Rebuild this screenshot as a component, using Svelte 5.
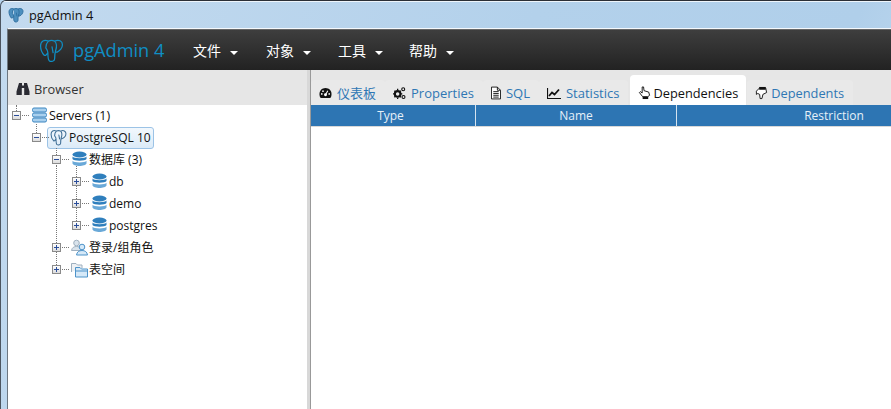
<script>
	const menus = ['文件', '对象', '工具', '帮助'];

	const tabs = [
		{ id: 'dashboard', label: '仪表板' },
		{ id: 'properties', label: 'Properties' },
		{ id: 'sql', label: 'SQL' },
		{ id: 'statistics', label: 'Statistics' },
		{ id: 'dependencies', label: 'Dependencies', active: true },
		{ id: 'dependents', label: 'Dependents' }
	];

	const columns = [
		{ label: 'Type', width: 165 },
		{ label: 'Name', width: 201 },
		{ label: 'Restriction', width: 315 }
	];

	// up = length of the dotted line that climbs from the toggle to its parent
	const tree = [
		{ depth: 0, open: true, icon: 'servers', label: 'Servers (1)', up: 6 },
		{ depth: 1, open: true, icon: 'elephant', label: 'PostgreSQL 10', up: 9, selected: true },
		{ depth: 2, open: true, icon: 'database', label: '数据库 (3)', up: 7 },
		{ depth: 3, icon: 'database', label: 'db', up: 11 },
		{ depth: 3, icon: 'database', label: 'demo', up: 13 },
		{ depth: 3, icon: 'database', label: 'postgres', up: 13 },
		{ depth: 2, icon: 'roles', label: '登录/组角色', up: 78 },
		{ depth: 2, icon: 'folders', label: '表空间', up: 13 }
	];

	const elephant =
		'M9 3C5 1 1.500 3 1.500 7.500C1.500 11 3.500 15 5 16.500C6.500 17.500 7.500 15.500 8.500 14M15 3C19 1 22.500 3 22.500 6.500C22.500 9.500 20 12.500 17.500 13.500C16 14 15.500 13 16 11.500M9 3C11 2 13 2 15 3C17 5 17 9 16 12C15 15 15 17 15 20C15 22.500 11.500 23 10 22C8.500 21 8.500 18 8.500 14C8.500 12 7.500 11 6.500 9.500M9 3C7.500 4.500 6.500 6 6.500 9.500M12.500 8.500L13.500 14';
</script>

{#snippet logo(size, width)}
	<svg class="elephant" viewBox="0 0 24 24" style="width:{size}px;height:{size}px" fill="none" stroke="currentColor" stroke-width={width} stroke-linecap="round">
		<path d={elephant} />
	</svg>
{/snippet}

{#snippet database()}
	<svg class="icon" viewBox="0 0 15 16">
		<ellipse cx="7.500" cy="3.500" rx="7" ry="3" fill="#2f7fbd" />
		<path d="M0.500 5.500C1.500 7.800 13.500 7.800 14.500 5.500V8C13.500 10.300 1.500 10.300 0.500 8Z" fill="#2f7fbd" />
		<path d="M0.500 9.800C1.500 12.100 13.500 12.100 14.500 9.800V12.500C13.500 15.800 1.500 15.800 0.500 12.500Z" fill="#6aa9d8" />
	</svg>
{/snippet}

{#snippet treeIcon(name)}
	{#if name === 'servers'}
		<svg class="icon" viewBox="0 0 15 16">
			<rect x="0.500" y="1" width="14" height="4" rx="1.500" fill="#a9d0ee" stroke="#3d86c0" />
			<rect x="0.500" y="6" width="14" height="4" rx="1.500" fill="#a9d0ee" stroke="#3d86c0" />
			<rect x="0.500" y="11" width="14" height="4" rx="1.500" fill="#a9d0ee" stroke="#3d86c0" />
		</svg>
	{:else if name === 'elephant'}
		<span class="pg-icon">{@render logo(17, 1.500)}</span>
	{:else if name === 'database'}
		{@render database()}
	{:else if name === 'roles'}
		<svg class="icon large" viewBox="0 0 17 17">
			<circle cx="5.500" cy="4" r="2.800" fill="#d9e3ec" stroke="#9fb0bf" />
			<path d="M0.500 11.500C1 8.500 3 7.500 5.500 7.500C8 7.500 10 8.500 10.500 11.500Z" fill="#d9e3ec" stroke="#9fb0bf" />
			<circle cx="11" cy="8" r="2.800" fill="#d6e9f8" stroke="#4d93c9" />
			<path d="M5.500 16C6 12.800 8 11.500 11 11.500C14 11.500 16 12.800 16.500 16Z" fill="#d6e9f8" stroke="#4d93c9" />
		</svg>
	{:else}
		<svg class="icon large" viewBox="0 0 17 17">
			<path d="M0.500 11V2.500H5L6.500 4H11V7" fill="#eef1f4" stroke="#9fb0bf" />
			<path d="M4.500 16V6.500H9L10.500 8H16.500V16Z" fill="#d6e9f8" stroke="#4d93c9" />
			<path d="M4.500 10H16.500" stroke="#4d93c9" />
		</svg>
	{/if}
{/snippet}

{#snippet tabIcon(id)}
	{#if id === 'dashboard'}
		<svg class="tab-icon" viewBox="0 0 14 14">
			<path d="M7 1.500C3 1.500 0.500 4.500 0.500 8C0.500 10 1 11.500 2 12.500H12C13 11.500 13.500 10 13.500 8C13.500 4.500 11 1.500 7 1.500Z" fill="#111" />
			<circle cx="7" cy="9" r="1.600" fill="#fff" />
			<path d="M7 9L9.500 4.500" stroke="#fff" stroke-width="1.100" />
			<g fill="#fff">
				<circle cx="3" cy="8" r="0.900" /><circle cx="4.300" cy="5" r="0.900" /><circle cx="11" cy="8" r="0.900" />
			</g>
		</svg>
	{:else if id === 'properties'}
		<svg class="tab-icon" viewBox="0 0 14 14">
			<circle cx="5" cy="8" r="3" fill="none" stroke="#111" stroke-width="2.200" />
			<g stroke="#111" stroke-width="1.400">
				<path d="M5 2.500V4M5 12V13.500M0 8H1.500M8.500 8H10M1.500 4.500L2.500 5.500M7.500 10.500L8.500 11.500M1.500 11.500L2.500 10.500M7.500 5.500L8.500 4.500" />
			</g>
			<circle cx="11" cy="3" r="1.600" fill="none" stroke="#111" stroke-width="1.200" />
			<circle cx="11.300" cy="11.300" r="1.600" fill="none" stroke="#111" stroke-width="1.200" />
		</svg>
	{:else if id === 'sql'}
		<svg class="tab-icon narrow" viewBox="0 0 11 14">
			<path d="M1 0.500H7L10.500 4V13.500H0.500V0.500Z" fill="#fff" stroke="#111" />
			<path d="M7 0.500V4H10.500M2.500 5.500H8.500M2.500 7.500H8.500M2.500 9.500H8.500M2.500 11.500H8.500" fill="none" stroke="#111" />
		</svg>
	{:else if id === 'statistics'}
		<svg class="tab-icon wide" viewBox="0 0 14 14">
			<path d="M0.500 2V12.500H14" fill="none" stroke="#111" stroke-width="1.200" />
			<path d="M2 10L5 6.500L7.500 8.500L12 3.500" fill="none" stroke="#111" stroke-width="1.800" />
		</svg>
	{:else if id === 'dependencies'}
		<svg class="tab-icon" viewBox="0 0 14 14">
			<path d="M4.500 0.500L6 0.500L6.500 4.500L11.500 6L12.500 9.500L10.500 11H5L1.500 6.500L2.500 5.500L4.500 7Z" fill="#fff" stroke="#111" />
			<rect x="5" y="11" width="6" height="2.500" fill="#111" />
		</svg>
	{:else}
		<svg class="tab-icon" viewBox="0 0 14 14">
			<path d="M1.500 5L5 1.500H11.500L12.500 6.500L8.500 8.500L7.500 13H5.500L5 8.500L3 7.500L1.500 8.500Z" fill="#fff" stroke="#111" />
			<rect x="4.500" y="0.500" width="7" height="3" fill="#111" />
		</svg>
	{/if}
{/snippet}

<div class="window">
	<div class="titlebar">
		<span class="title-logo">
			<svg viewBox="0 0 24 24" width="16" height="16">
				<path d={elephant} fill="#4d8fbe" stroke="#2f6f9f" stroke-width="1.400" />
			</svg>
		</span>
		<span class="title">pgAdmin 4</span>
	</div>

	<div class="client">
		<nav class="navbar">
			<span class="brand">
				{@render logo(25, 1.200)}
				<span>pgAdmin 4</span>
			</span>
			{#each menus as menu}
				<span class="menu">{menu}<i class="caret"></i></span>
			{/each}
		</nav>

		<div class="panels">
			<aside class="browser">
				<header class="browser-head">
					<svg class="binoculars" viewBox="0 0 14 14">
						<path d="M3 1H6V3.500H8V1H11L13.500 9.500V13H8.200V6H5.800V13H0.500V9.500Z" fill="#2b2b33" />
					</svg>
					Browser
				</header>
				<ul class="tree">
					{#each tree as node}
						<li class="node depth-{node.depth}">
							<span class="toggle">
								<span class="up" style="height:{node.up}px"></span>
								<span class="glyph" class:plus={!node.open}></span>
								<span class="across"></span>
							</span>
							<span class="item" class:selected={node.selected}>
								{@render treeIcon(node.icon)}
								<span>{node.label}</span>
							</span>
						</li>
					{/each}
				</ul>
			</aside>

			<div class="splitter"></div>

			<main class="content">
				<div class="tabs">
					{#each tabs as tab}
						<span class="tab" class:active={tab.active}>
							{@render tabIcon(tab.id)}
							{tab.label}
						</span>
					{/each}
				</div>
				<div class="table-head">
					{#each columns as col}
						<span class="col" style="width:{col.width}px">{col.label}</span>
					{/each}
				</div>
			</main>
		</div>
	</div>
</div>

<style>
	:global(body) {
		margin: 0;
		background: #b6d3ec;
	}
	.window {
		width: 891px;
		height: 409px;
		box-sizing: border-box;
		display: flex;
		flex-direction: column;
		overflow: hidden;
		padding-left: 1px;
		border-top: 1px solid #2b2f36;
		border-left: 1px solid #4c5560;
		border-top-left-radius: 6px;
		background: linear-gradient(115deg, #c3daef 0%, #b3d1eb 50%, #b0cfea 80%, #cadff2 100%);
		font-family: 'Open Sans', 'Noto Sans CJK SC', sans-serif;
		font-size: 12px;
		color: #222;
	}
	.titlebar {
		flex: none;
		height: 27px;
		box-sizing: border-box;
		border-top: 1px solid #eef5fb;
		display: flex;
		align-items: center;
		gap: 5px;
		padding-left: 6px;
	}
	.title-logo {
		display: flex;
	}
	.title {
		font-size: 12.800px;
		color: #111;
	}
	.client {
		flex: 1;
		min-height: 0;
		margin-left: 5px;
		display: flex;
		flex-direction: column;
		border-top: 1px solid #f4f8fc;
		border-left: 1px solid #6c7680;
		background: #fff;
	}
	.navbar {
		flex: none;
		height: 41px;
		box-sizing: border-box;
		border-top: 1px solid #666;
		background: linear-gradient(#3e3e3e, #222);
		display: flex;
		align-items: center;
		padding-left: 31px;
		color: #fff;
		font-size: 14px;
	}
	.brand {
		display: flex;
		align-items: center;
		gap: 9px;
		width: 154px;
		font-size: 18.200px;
		color: #0f8ec4;
	}
	.menu {
		width: 72px;
		flex: none;
		white-space: nowrap;
		display: flex;
		align-items: center;
	}
	.menu:nth-child(2) {
		width: 73px;
	}
	.menu:nth-child(4) {
		width: 71px;
	}
	.caret {
		margin: 5px 0 0 9px;
		border-top: 4px solid #fff;
		border-left: 4px solid transparent;
		border-right: 4px solid transparent;
	}
	.panels {
		flex: 1;
		min-height: 0;
		display: flex;
	}
	.browser {
		width: 299px;
		flex: none;
	}
	.browser-head {
		height: 35px;
		box-sizing: border-box;
		background: #e6e6e6;
		display: flex;
		align-items: center;
		gap: 4px;
		padding-left: 8px;
		padding-top: 3px;
		color: #333;
		font-size: 12.800px;
	}
	.binoculars {
		width: 14px;
		height: 14px;
	}
	.tree {
		list-style: none;
		margin: -1px 0 0;
		padding: 0;
		color: #111;
	}
	.node {
		display: flex;
		align-items: center;
		height: 22px;
		white-space: nowrap;
	}
	.depth-0 { padding-left: 4px; font-size: 12.500px; }
	.depth-1 { padding-left: 24px; }
	.depth-2 { padding-left: 44px; }
	.depth-3 { padding-left: 64px; }
	.toggle {
		position: relative;
		flex: none;
		width: 20px;
		height: 9px;
	}
	.up {
		position: absolute;
		left: 4px;
		bottom: 9px;
		border-left: 1px dotted #777;
	}
	.glyph {
		position: absolute;
		left: 0;
		top: 0;
		width: 9px;
		height: 9px;
		box-sizing: border-box;
		border: 1px solid #8a8a8a;
		background: linear-gradient(#fff, #dcdcdc);
		background-color: #eee;
	}
	.glyph::before,
	.plus::after {
		content: '';
		position: absolute;
		background: #2a4d9a;
	}
	.glyph::before {
		left: 1px;
		top: 3px;
		width: 5px;
		height: 1px;
	}
	.plus::after {
		left: 3px;
		top: 1px;
		width: 1px;
		height: 5px;
	}
	.across {
		position: absolute;
		left: 10px;
		top: 4px;
		width: 7px;
		border-top: 1px dotted #777;
	}
	.item {
		display: flex;
		align-items: center;
		gap: 2px;
		height: 100%;
		box-sizing: border-box;
	}
	.selected {
		height: 22px;
		margin: 1px 0 0 -5px;
		padding: 0 2px;
		border: 1px solid #9cc3e6;
		border-radius: 3px;
		background: linear-gradient(#f2f8fd, #dcebf8);
	}
	.icon {
		width: 15px;
		height: 16px;
		flex: none;
	}
	.icon.large {
		width: 17px;
		height: 17px;
		margin: 0 -1px;
	}
	.pg-icon {
		display: flex;
		color: #3f6f96;
	}
	.elephant {
		flex: none;
	}
	.splitter {
		flex: none;
		width: 4px;
		box-sizing: border-box;
		background: #d8d8d8;
		border-right: 1px solid #999;
	}
	.content {
		flex: 1;
		min-width: 0;
		overflow: hidden;
	}
	.tabs {
		height: 35px;
		box-sizing: border-box;
		background: #e6e6e6;
		display: flex;
		align-items: flex-end;
		font-size: 13px;
		color: #2f77b4;
	}
	.tab {
		flex: none;
		height: 25px;
		box-sizing: border-box;
		display: flex;
		align-items: center;
		gap: 5px;
		padding: 0 9px 0 8px;
		border-radius: 4px 4px 0 0;
		background: #e9e9e9;
		white-space: nowrap;
	}
	.tab.active {
		height: 30px;
		margin-left: 2px;
		padding: 5px 8px 0;
		background: #fff;
		color: #111;
		font-size: 12.800px;
		gap: 2px;
	}
	.tab:last-child {
		margin-left: 1px;
		gap: 3px;
		font-size: 12.800px;
	}
	.tab-icon {
		width: 13px;
		height: 14px;
		flex: none;
	}
	.tab-icon.narrow {
		width: 10px;
	}
	.tab-icon.wide {
		width: 14px;
	}
	.table-head {
		display: flex;
		width: 700px;
		height: 22px;
		box-sizing: border-box;
		background: #2d75b3;
		border-bottom: 1px solid #d8d8d8;
		color: #e6f0f8;
		font-size: 12px;
	}
	.col {
		flex: none;
		box-sizing: border-box;
		border-right: 1px solid #d5e3ef;
		text-align: center;
		line-height: 21px;
	}
	.col:first-child {
		padding-right: 5px;
	}
</style>
